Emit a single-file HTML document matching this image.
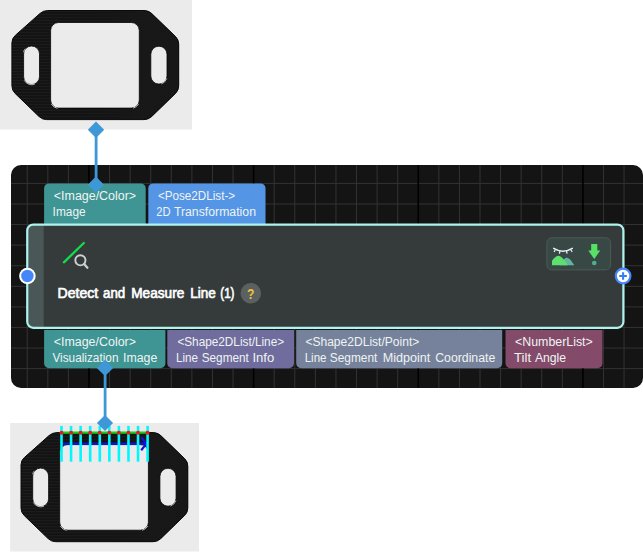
<!DOCTYPE html>
<html>
<head>
<meta charset="utf-8">
<title>Detect and Measure Line</title>
<style>
html,body{margin:0;padding:0;background:#fff;}
body{width:643px;height:552px;position:relative;overflow:hidden;font-family:"Liberation Sans",sans-serif;}
svg{position:absolute;left:0;top:0;display:block;}
text{font-family:"Liberation Sans",sans-serif;}
.t{font-size:12.3px;fill:#eef4f3;}
.ttl{font-size:14px;font-weight:normal;fill:#ffffff;stroke:#ffffff;stroke-width:0.65px;}
</style>
</head>
<body>
<svg width="643" height="552" viewBox="0 0 643 552">
<defs>
  <pattern id="stripe" width="4" height="3" patternUnits="userSpaceOnUse">
    <rect width="4" height="3" fill="#0b0b0b"/>
    <rect y="0.300" width="4" height="1.300" fill="#252525"/>
  </pattern>
  <linearGradient id="sheen" x1="0" y1="0" x2="1" y2="0">
    <stop offset="0" stop-color="#101010" stop-opacity="0"/>
    <stop offset="0.450" stop-color="#131313" stop-opacity="0.350"/>
    <stop offset="0.780" stop-color="#181818" stop-opacity="0.900"/>
    <stop offset="1" stop-color="#171717" stop-opacity="0.950"/>
  </linearGradient>
  <g id="part">
    <path d="M28.04,2.99 Q31.40,0.00 35.90,0.00 L132.20,0.00 Q136.70,0.00 139.94,3.13 L163.56,25.97 Q166.80,29.10 166.80,33.60 L166.80,75.30 Q166.80,79.80 163.57,82.93 L139.83,105.97 Q136.60,109.10 132.10,109.10 L34.80,109.10 Q30.30,109.10 27.07,105.97 L3.23,82.93 Q0.00,79.80 0.00,75.30 L0.00,32.40 Q0.00,27.90 3.36,24.91 Z" fill="url(#stripe)"/>
    <path d="M28.04,2.99 Q31.40,0.00 35.90,0.00 L132.20,0.00 Q136.70,0.00 139.94,3.13 L163.56,25.97 Q166.80,29.10 166.80,33.60 L166.80,75.30 Q166.80,79.80 163.57,82.93 L139.83,105.97 Q136.60,109.10 132.10,109.10 L34.80,109.10 Q30.30,109.10 27.07,105.97 L3.23,82.93 Q0.00,79.80 0.00,75.30 L0.00,32.40 Q0.00,27.90 3.36,24.91 Z" fill="url(#sheen)"/>
    <path d="M28.04,2.99 Q31.40,0.00 35.90,0.00 L132.20,0.00 Q136.70,0.00 139.94,3.13 L163.56,25.97 Q166.80,29.10 166.80,33.60 L166.80,75.30 Q166.80,79.80 163.57,82.93 L139.83,105.97 Q136.60,109.10 132.10,109.10 L34.80,109.10 Q30.30,109.10 27.07,105.97 L3.23,82.93 Q0.00,79.80 0.00,75.30 L0.00,32.40 Q0.00,27.90 3.36,24.91 Z" fill="none" stroke="#0a0a0a" stroke-width="1"/>
    <path d="M46.70,12.00 H119.40 A8,8 0 0 1 127.40,20.00 V89.60 A8,8 0 0 1 119.40,97.60 H46.70 A8,8 0 0 1 38.70,89.60 V20.00 A8,8 0 0 1 46.70,12.00 Z" fill="#ebebeb" stroke="#050505" stroke-width="0.800"/>
    <path d="M19.60,35.50 H19.70 A7.9,7.9 0 0 1 27.60,43.40 V66.20 A7.9,7.9 0 0 1 19.70,74.10 H19.60 A7.9,7.9 0 0 1 11.70,66.20 V43.40 A7.9,7.9 0 0 1 19.60,35.50 Z" fill="#ebebeb" stroke="#050505" stroke-width="0.800"/>
    <path d="M147.00,35.70 H147.00 A8.1,8.1 0 0 1 155.10,43.80 V65.50 A8.1,8.1 0 0 1 147.00,73.60 H147.00 A8.1,8.1 0 0 1 138.90,65.50 V43.80 A8.1,8.1 0 0 1 147.00,35.70 Z" fill="#ebebeb" stroke="#050505" stroke-width="0.800"/>
    <path d="M22.45,73.86 A8.2,8.2 0 0 1 12.55,70.25 M11.73,41.33 A8.2,8.2 0 0 1 12.93,38.75 M154.80,68.34 A8.3,8.3 0 0 1 149.84,73.30 M45.26,97.77 A8.3,8.3 0 0 1 39.51,93.75 M126.59,93.75 A8.3,8.3 0 0 1 121.55,97.62" fill="none" stroke="#e8e8e8" stroke-width="0.900" stroke-linecap="round" opacity="0.850"/>
  </g>
  <clipPath id="panelclip"><rect x="11" y="165" width="632" height="223" rx="10" ry="10"/></clipPath>
</defs>

<rect x="0" y="0" width="192" height="129.500" fill="#ebebeb"/>
<use href="#part" x="11.900" y="10.500"/>
<rect x="10.100" y="423" width="188.900" height="128.500" fill="#ebebeb"/>
<use href="#part" x="21" y="432.600"/>
<line x1="63" y1="443.850" x2="146" y2="443.850" stroke="#0a14e6" stroke-width="2"/>
<path d="M141.200,437.300 L146.300,443.850 L141.200,450.300" fill="none" stroke="#0a14e6" stroke-width="2.200"/>
<g stroke="#00f8ff" stroke-width="2.600">
<line x1="61.50" y1="425.900" x2="61.50" y2="461.700"/>
<line x1="71.07" y1="425.900" x2="71.07" y2="461.700"/>
<line x1="80.63" y1="425.900" x2="80.63" y2="461.700"/>
<line x1="90.20" y1="425.900" x2="90.20" y2="461.700"/>
<line x1="99.77" y1="425.900" x2="99.77" y2="461.700"/>
<line x1="109.34" y1="425.900" x2="109.34" y2="461.700"/>
<line x1="118.90" y1="425.900" x2="118.90" y2="461.700"/>
<line x1="128.47" y1="425.900" x2="128.47" y2="461.700"/>
<line x1="138.04" y1="425.900" x2="138.04" y2="461.700"/>
<line x1="147.60" y1="425.900" x2="147.60" y2="461.700"/>
</g>
<line x1="61" y1="432.700" x2="148" y2="432.700" stroke="#12d21a" stroke-width="2.200"/>
<g fill="#f01414">
<circle cx="61.50" cy="432.700" r="2"/>
<circle cx="71.07" cy="432.700" r="2"/>
<circle cx="80.63" cy="432.700" r="2"/>
<circle cx="90.20" cy="432.700" r="2"/>
<circle cx="99.77" cy="432.700" r="2"/>
<circle cx="109.34" cy="432.700" r="2"/>
<circle cx="118.90" cy="432.700" r="2"/>
<circle cx="128.47" cy="432.700" r="2"/>
<circle cx="138.04" cy="432.700" r="2"/>
<circle cx="147.60" cy="432.700" r="2"/>
</g>
<g clip-path="url(#panelclip)">
<rect x="11" y="165" width="632" height="223" fill="#141414"/>
<g stroke="#333333" stroke-width="1">
<line x1="27.25" y1="165" x2="27.25" y2="388"/>
<line x1="47.83" y1="165" x2="47.83" y2="388"/>
<line x1="68.41" y1="165" x2="68.41" y2="388"/>
<line x1="109.57" y1="165" x2="109.57" y2="388"/>
<line x1="130.15" y1="165" x2="130.15" y2="388"/>
<line x1="150.73" y1="165" x2="150.73" y2="388"/>
<line x1="171.31" y1="165" x2="171.31" y2="388"/>
<line x1="191.89" y1="165" x2="191.89" y2="388"/>
<line x1="212.47" y1="165" x2="212.47" y2="388"/>
<line x1="233.05" y1="165" x2="233.05" y2="388"/>
<line x1="274.21" y1="165" x2="274.21" y2="388"/>
<line x1="294.79" y1="165" x2="294.79" y2="388"/>
<line x1="315.37" y1="165" x2="315.37" y2="388"/>
<line x1="335.95" y1="165" x2="335.95" y2="388"/>
<line x1="356.53" y1="165" x2="356.53" y2="388"/>
<line x1="377.11" y1="165" x2="377.11" y2="388"/>
<line x1="397.69" y1="165" x2="397.69" y2="388"/>
<line x1="438.85" y1="165" x2="438.85" y2="388"/>
<line x1="459.43" y1="165" x2="459.43" y2="388"/>
<line x1="480.01" y1="165" x2="480.01" y2="388"/>
<line x1="500.59" y1="165" x2="500.59" y2="388"/>
<line x1="521.17" y1="165" x2="521.17" y2="388"/>
<line x1="541.75" y1="165" x2="541.75" y2="388"/>
<line x1="562.33" y1="165" x2="562.33" y2="388"/>
<line x1="603.49" y1="165" x2="603.49" y2="388"/>
<line x1="624.07" y1="165" x2="624.07" y2="388"/>
<line x1="11" y1="183.40" x2="643" y2="183.40"/>
<line x1="11" y1="203.98" x2="643" y2="203.98"/>
<line x1="11" y1="224.56" x2="643" y2="224.56"/>
<line x1="11" y1="245.14" x2="643" y2="245.14"/>
<line x1="11" y1="265.72" x2="643" y2="265.72"/>
<line x1="11" y1="286.30" x2="643" y2="286.30"/>
<line x1="11" y1="306.88" x2="643" y2="306.88"/>
<line x1="11" y1="327.46" x2="643" y2="327.46"/>
<line x1="11" y1="348.04" x2="643" y2="348.04"/>
<line x1="11" y1="368.62" x2="643" y2="368.62"/>
</g>
<g stroke="#000" stroke-width="1.600">
<line x1="88.99" y1="165" x2="88.99" y2="388"/>
<line x1="253.63" y1="165" x2="253.63" y2="388"/>
<line x1="418.27" y1="165" x2="418.27" y2="388"/>
<line x1="582.91" y1="165" x2="582.91" y2="388"/>
</g>
</g>
<path d="M44.1,224.0 V188.4 a5,5 0 0 1 5,-5 H140.7 a5,5 0 0 1 5,5 V224.0 Z" fill="#3f9593"/>
<path d="M148.3,224.0 V188.4 a5,5 0 0 1 5,-5 H260.5 a5,5 0 0 1 5,5 V224.0 Z" fill="#5595e6"/>
<path d="M44.1,329.9 V363.2 a5,5 0 0 0 5,5 H160.4 a5,5 0 0 0 5,-5 V329.9 Z" fill="#3f9593"/>
<path d="M167.3,329.9 V363.2 a5,5 0 0 0 5,5 H289.0 a5,5 0 0 0 5,-5 V329.9 Z" fill="#706c9d"/>
<path d="M296.2,329.9 V363.2 a5,5 0 0 0 5,5 H497.2 a5,5 0 0 0 5,-5 V329.9 Z" fill="#76829b"/>
<path d="M505.5,329.9 V363.2 a5,5 0 0 0 5,5 H597.5 a5,5 0 0 0 5,-5 V329.9 Z" fill="#844a69"/>
<text class="t" x="53.8" y="200.0" textLength="82.3" lengthAdjust="spacingAndGlyphs">&lt;Image/Color&gt;</text>
<text class="t" x="52.6" y="215.5" textLength="33.0" lengthAdjust="spacingAndGlyphs">Image</text>
<text class="t" x="157.9" y="200.0" textLength="77.2" lengthAdjust="spacingAndGlyphs">&lt;Pose2DList-&gt;</text>
<text class="t" y="215.5"><tspan x="156.2" textLength="14.3" lengthAdjust="spacingAndGlyphs">2D</tspan> <tspan x="173.9" textLength="82.1" lengthAdjust="spacingAndGlyphs">Transformation</tspan></text>
<text class="t" x="53.7" y="346.1" textLength="82.3" lengthAdjust="spacingAndGlyphs">&lt;Image/Color&gt;</text>
<text class="t" y="362.0"><tspan x="52.4" textLength="66.1" lengthAdjust="spacingAndGlyphs">Visualization</tspan> <tspan x="123.1" textLength="34.2" lengthAdjust="spacingAndGlyphs">Image</tspan></text>
<text class="t" x="177.4" y="346.1" textLength="106.7" lengthAdjust="spacingAndGlyphs">&lt;Shape2DList/Line&gt;</text>
<text class="t" y="362.0"><tspan x="176.0" textLength="22.0" lengthAdjust="spacingAndGlyphs">Line</tspan> <tspan x="201.7" textLength="47.1" lengthAdjust="spacingAndGlyphs">Segment</tspan> <tspan x="252.4" textLength="21.8" lengthAdjust="spacingAndGlyphs">Info</tspan></text>
<text class="t" x="305.4" y="346.1" textLength="113.9" lengthAdjust="spacingAndGlyphs">&lt;Shape2DList/Point&gt;</text>
<text class="t" y="362.0"><tspan x="304.7" textLength="21.8" lengthAdjust="spacingAndGlyphs">Line</tspan> <tspan x="329.8" textLength="47.5" lengthAdjust="spacingAndGlyphs">Segment</tspan> <tspan x="382.7" textLength="47.6" lengthAdjust="spacingAndGlyphs">Midpoint</tspan> <tspan x="435.2" textLength="60.1" lengthAdjust="spacingAndGlyphs">Coordinate</tspan></text>
<text class="t" x="515.0" y="346.1" textLength="77.8" lengthAdjust="spacingAndGlyphs">&lt;NumberList&gt;</text>
<text class="t" y="362.0"><tspan x="514.0" textLength="17.1" lengthAdjust="spacingAndGlyphs">Tilt</tspan> <tspan x="534.9" textLength="31.2" lengthAdjust="spacingAndGlyphs">Angle</tspan></text>
<rect x="27.250" y="224.550" width="596.150" height="103.300" rx="6" fill="#353b3b"/>
<path d="M43.700,224.550 H33.250 a6,6 0 0 0 -6,6 V321.850 a6,6 0 0 0 6,6 H43.700 Z" fill="#4a5757"/>
<rect x="27.250" y="224.550" width="596.150" height="103.300" rx="6" fill="none" stroke="#aef3ee" stroke-width="2.200"/>
<line x1="63.900" y1="262.300" x2="83.800" y2="243" stroke="#10dc4e" stroke-width="2.300" stroke-linecap="round"/>
<circle cx="80.400" cy="260.300" r="5.100" fill="none" stroke="#cdd0d0" stroke-width="1.900"/>
<line x1="84.300" y1="264.300" x2="87.400" y2="267.700" stroke="#cdd0d0" stroke-width="2.300" stroke-linecap="round"/>
<text class="ttl" y="297.7"><tspan x="57.5" textLength="40.8" lengthAdjust="spacingAndGlyphs">Detect</tspan> <tspan x="103.0" textLength="22.2" lengthAdjust="spacingAndGlyphs">and</tspan> <tspan x="131.2" textLength="53.1" lengthAdjust="spacingAndGlyphs">Measure</tspan> <tspan x="190.3" textLength="25.5" lengthAdjust="spacingAndGlyphs">Line</tspan> <tspan x="220.3" textLength="14.1" lengthAdjust="spacingAndGlyphs">(1)</tspan></text>
<circle cx="250.800" cy="293.200" r="10.300" fill="#5b6160"/>
<text x="246.900" y="298.800" font-size="15" font-weight="bold" fill="#efc03e" textLength="7.400" lengthAdjust="spacingAndGlyphs">?</text>
<rect x="546.900" y="237.800" width="63.700" height="32.100" rx="5" fill="#374845" stroke="#4a5b58" stroke-width="1"/>
<g fill="none" stroke="#e6edf8" stroke-linecap="round">
<path d="M553.700,248.400 Q563,254 572.300,248.400" stroke-width="1.500"/>
<path d="M555.200,250 L554.300,251.500 M559.900,251.300 L559.500,253.100 M566.600,251.300 L567,253.100 M571,250 L571.900,251.500" stroke-width="1.300"/>
</g>
<path d="M560,265.200 C562.500,260 565,257.700 566.800,257.700 C569.500,257.700 572.200,262 574.200,265.200 Z" fill="#62b5a0"/>
<path d="M552,265.200 V260.800 C554,258 556.200,255.700 558.200,255.700 C561.200,255.700 565,260.500 567.800,265.200 Z" fill="#5fe06e"/>
<path d="M591.200,243.900 H597.300 V250.600 H600.200 L594.250,259 L588.300,250.600 H591.200 Z" fill="#58e066"/>
<circle cx="594.250" cy="263" r="2.300" fill="#4fae8e"/>
<circle cx="27.400" cy="276" r="8.300" fill="#ffffff"/>
<circle cx="27.400" cy="276" r="6.200" fill="#4587f8"/>
<circle cx="623.100" cy="276" r="7.300" fill="#ffffff" stroke="#4587f8" stroke-width="2.200"/>
<path d="M619.300,276 H626.900 M623.100,272.200 V279.800" stroke="#3b7df0" stroke-width="2.100" fill="none"/>
<g fill="#3e97d6">
<rect x="94.700" y="130" width="2.800" height="55"/>
<path d="M96.00,121.60 L104.15,129.75 L96.00,137.90 L87.85,129.75 Z"/>
<path d="M95.90,176.60 L104.00,184.70 L95.90,192.80 L87.80,184.70 Z"/>
<rect x="103.700" y="368" width="2.800" height="55"/>
<path d="M105.00,359.70 L113.20,367.90 L105.00,376.10 L96.80,367.90 Z"/>
<path d="M105.00,414.90 L113.10,423.00 L105.00,431.10 L96.90,423.00 Z"/>
</g>
</svg>
</body>
</html>
